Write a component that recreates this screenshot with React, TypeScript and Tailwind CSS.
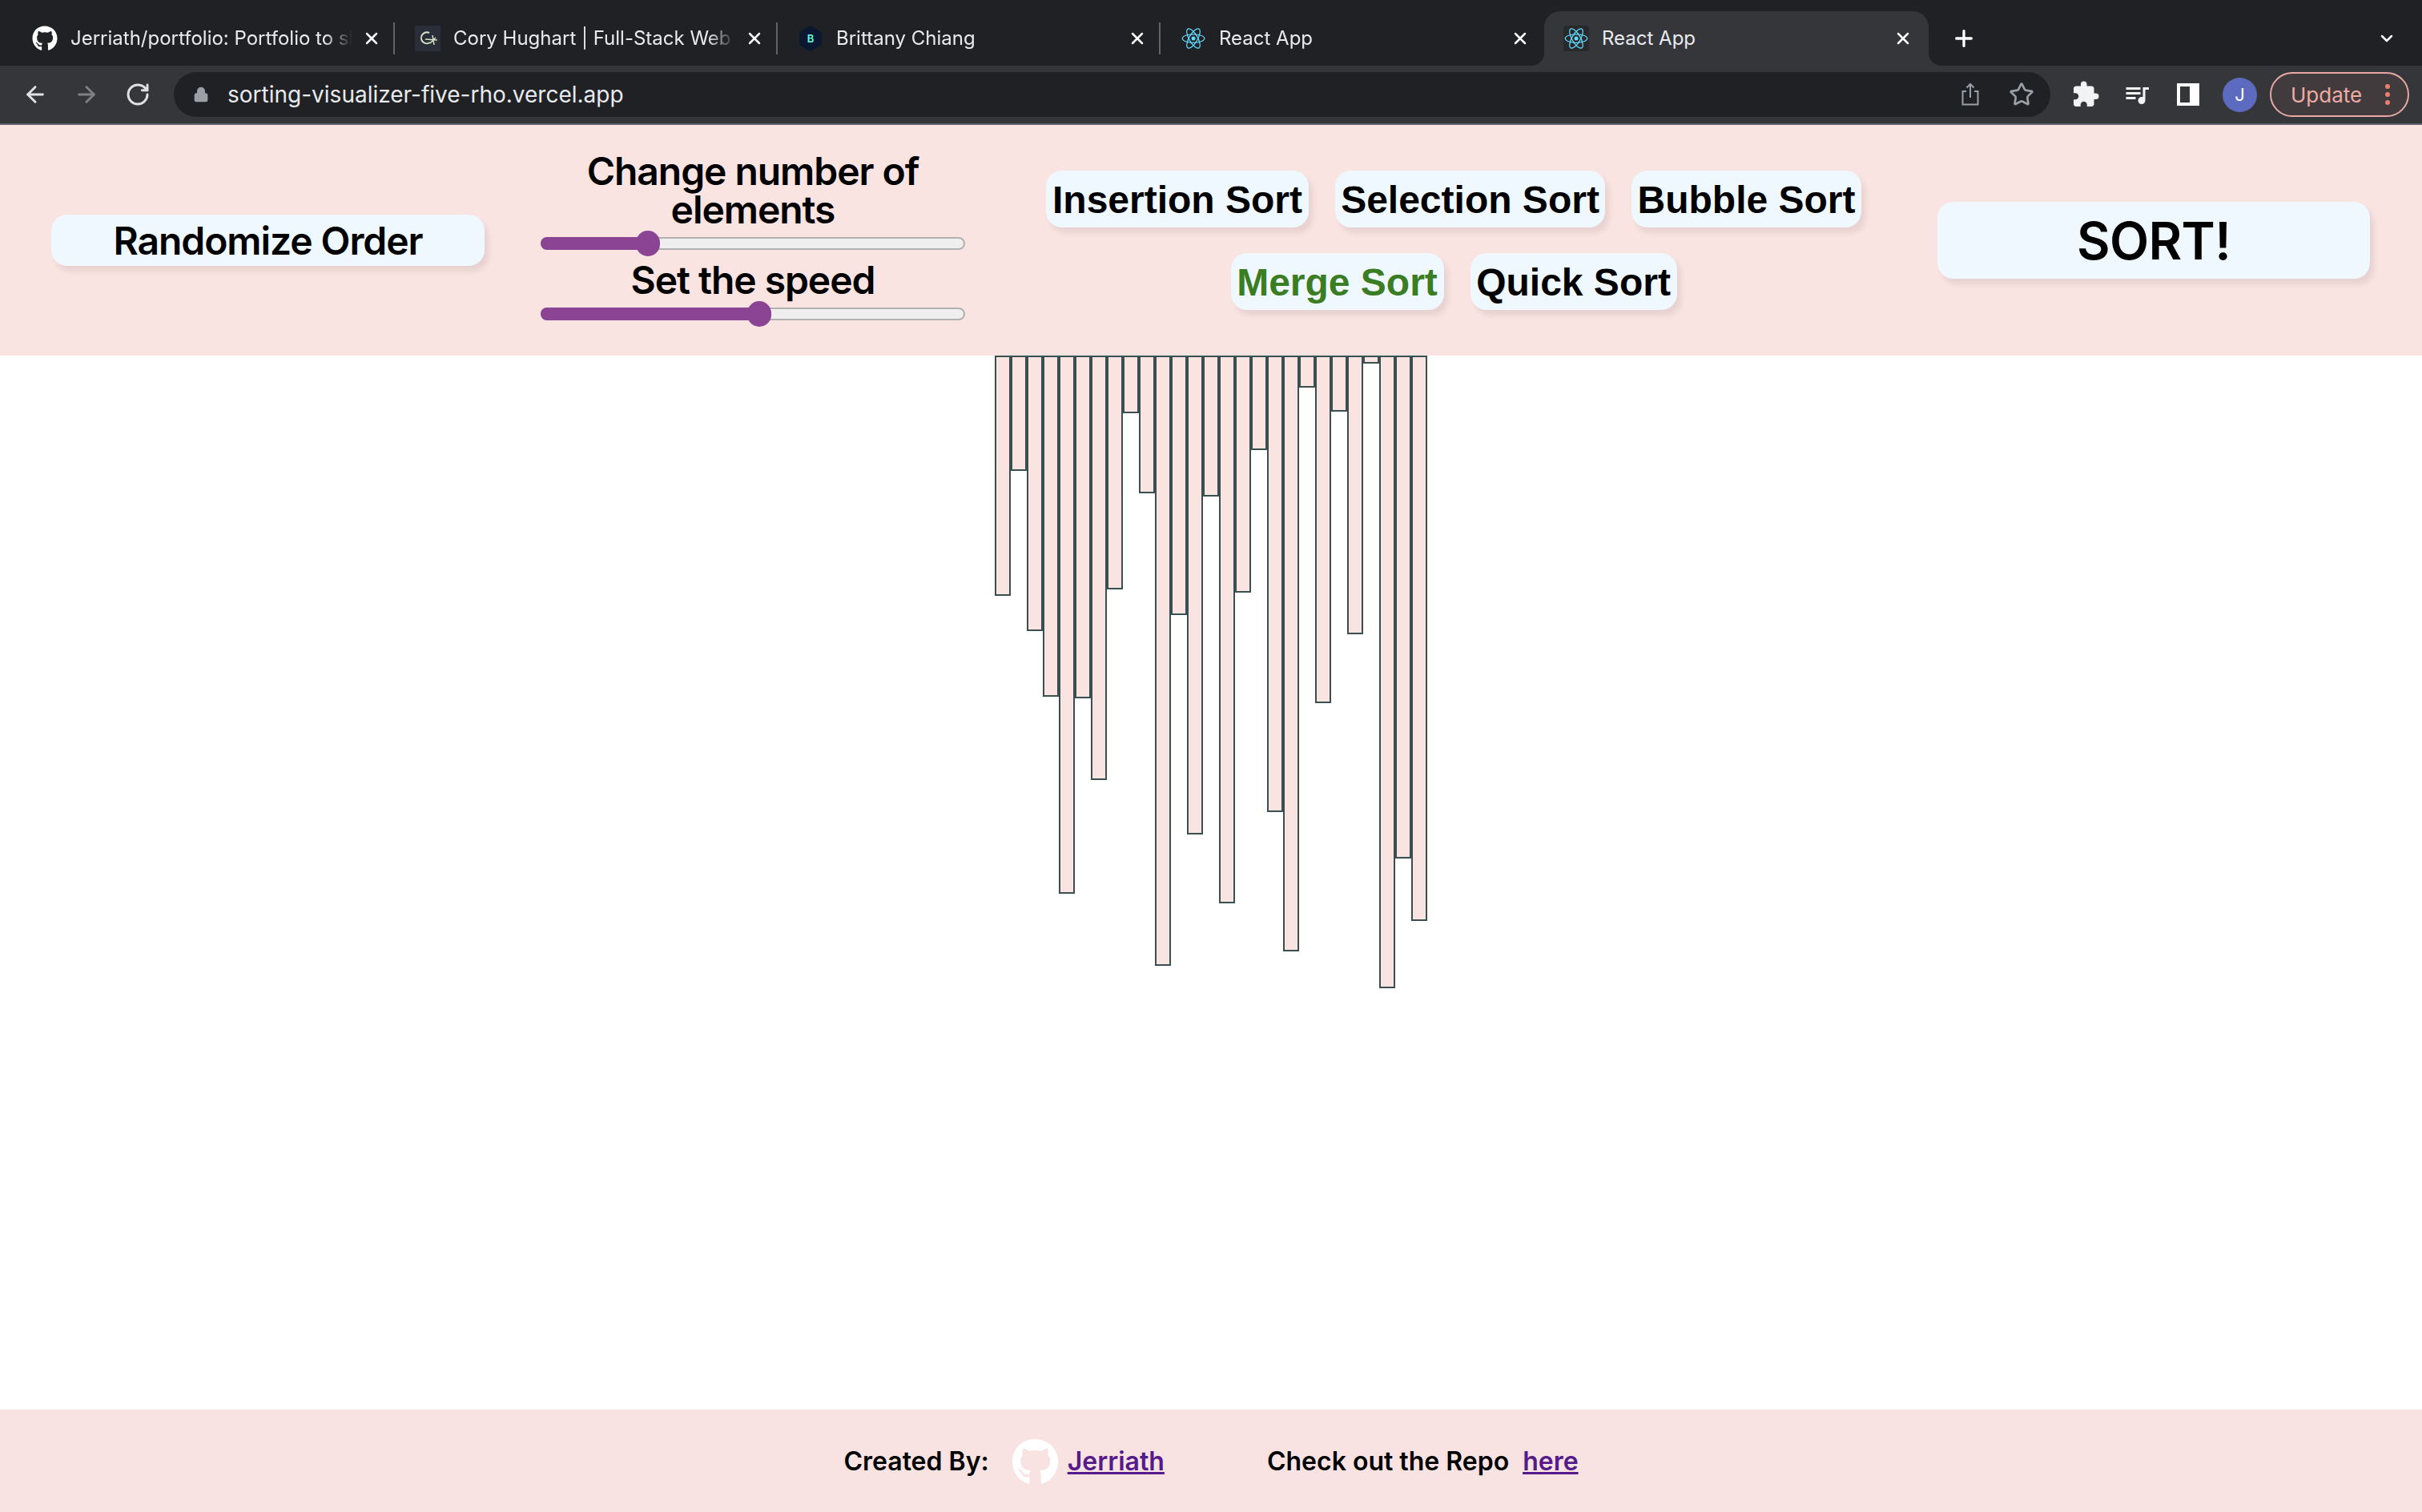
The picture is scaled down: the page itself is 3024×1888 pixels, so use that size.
import type { ReactNode } from "react";
import { FaGithub } from "react-icons/fa";
import { MdExtension, MdQueueMusic } from "react-icons/md";
import { ArrowLeft, ArrowRight, ChevronDown, Lock, Plus, RotateCw, Star, X } from "lucide-react";

const BAR_HEIGHTS = [
  300, 144, 344, 426, 672, 428, 530, 292, 72, 172, 762, 324, 598, 176, 684, 296, 118, 570, 744, 40, 434, 70, 348, 10,
  790, 628, 706,
];

function ReactIcon() {
  return (
    <svg viewBox="-12 -12 24 24" className="h-[30px] w-[30px]" fill="none" stroke="#61dafb" strokeWidth="1">
      <circle r="2" fill="#61dafb" stroke="none" />
      <ellipse rx="11" ry="4.2" />
      <ellipse rx="11" ry="4.2" transform="rotate(60)" />
      <ellipse rx="11" ry="4.2" transform="rotate(120)" />
    </svg>
  );
}

function CoryIcon() {
  return (
    <div className="flex h-8 w-8 items-center justify-center bg-[#2a2e38]">
      <svg viewBox="0 0 32 32" className="h-8 w-8" fill="none" stroke="#d7e6c8" strokeWidth="2">
        <path d="M18 9a7 7 0 1 0 1 12" />
        <path d="M13 17l15 1M22 12l2 12M19 22l7-7" strokeWidth="1.5" />
      </svg>
    </div>
  );
}

function BrittanyIcon() {
  return (
    <svg viewBox="0 0 32 32" className="h-8 w-8">
      <polygon points="16,0 30,8 30,24 16,32 2,24 2,8" fill="#0a192f" />
      <text x="16" y="21" textAnchor="middle" fontSize="13" fontWeight="600" fill="#64ffda" fontFamily="Inter, sans-serif">
        B
      </text>
    </svg>
  );
}

function Tab({ icon, title, last }: { icon: ReactNode; title: string; last?: boolean }) {
  return (
    <div className="flex h-[68px] w-[478px] items-center pl-6">
      <div className="flex h-8 w-8 shrink-0 items-center justify-center">{icon}</div>
      <div className="ml-4 w-[352px] overflow-hidden whitespace-nowrap text-[24px] text-[#e8eaed] [mask-image:linear-gradient(to_right,black_90%,transparent)]">
        {title}
      </div>
      <X className="ml-[12px] h-6 w-6 shrink-0 text-white" strokeWidth={2.5} />
      {!last && <div className="ml-[15px] h-10 w-[2px] shrink-0 bg-[#5f6368]" />}
    </div>
  );
}

function ActiveTab() {
  return (
    <div className="relative flex h-[68px] w-[480px] items-center rounded-t-[20px] bg-[#35363a] pl-6">
      <div className="absolute -left-4 bottom-0 h-4 w-4 bg-[#35363a]">
        <div className="h-4 w-4 rounded-br-[16px] bg-[#202124]" />
      </div>
      <div className="absolute -right-4 bottom-0 h-4 w-4 bg-[#35363a]">
        <div className="h-4 w-4 rounded-bl-[16px] bg-[#202124]" />
      </div>
      <div className="flex h-8 w-8 items-center justify-center rounded bg-[#28292c]">
        <ReactIcon />
      </div>
      <div className="ml-4 w-[352px] text-[24px] text-[#e8eaed]">React App</div>
      <X className="ml-[12px] h-6 w-6 text-white" strokeWidth={2.5} />
    </div>
  );
}

function ShareIcon() {
  return (
    <svg viewBox="0 0 24 30" className="h-[30px] w-6" fill="none" stroke="#9aa0a6" strokeWidth="2">
      <path d="M7 11H2.500v16.500h19V11H17" />
      <path d="M12 19V2M7.500 6.500 12 2l4.500 4.500" />
    </svg>
  );
}

function SidePanelIcon() {
  return <div className="h-[28px] w-[28px] border-[4px] border-r-[12px] border-white bg-[#35363a]" />;
}

function BrowserChrome() {
  return (
    <div className="bg-[#202124]">
      <div className="flex h-[82px] items-end pl-4">
        <Tab icon={<FaGithub className="h-8 w-8 text-white" />} title="Jerriath/portfolio: Portfolio to showcase" />
        <Tab icon={<CoryIcon />} title="Cory Hughart | Full-Stack Web Developer" />
        <Tab icon={<BrittanyIcon />} title="Brittany Chiang" />
        <Tab icon={<ReactIcon />} title="React App" last />
        <ActiveTab />
        <Plus className="ml-[28px] mb-[18px] h-8 w-8 text-white" strokeWidth={2.5} />
        <ChevronDown className="ml-[500px] mb-[22px] h-6 w-6 text-white" strokeWidth={2.5} />
      </div>
      <div className="flex h-[74px] items-center border-b-2 border-[#5f6368] bg-[#35363a] pl-[28px] pr-[15px]">
        <ArrowLeft className="h-8 w-8 text-[#dfe1e5]" strokeWidth={2.2} />
        <ArrowRight className="ml-8 h-8 w-8 text-[#7d8085]" strokeWidth={2.2} />
        <RotateCw className="ml-8 h-8 w-8 text-[#dfe1e5]" strokeWidth={2.2} />
        <div className="ml-[29px] flex h-14 w-[2343px] items-center rounded-full bg-[#202124] pl-[24px]">
          <Lock className="h-[22px] w-[20px] text-[#9aa0a6]" fill="#9aa0a6" strokeWidth={2} />
          <span className="ml-[23px] text-[28px] text-[#e8eaed]">sorting-visualizer-five-rho.vercel.app</span>
          <div className="ml-auto flex items-center gap-[36px] pr-[20px]">
            <ShareIcon />
            <Star className="h-[32px] w-[32px] text-[#9aa0a6]" strokeWidth={2} />
          </div>
        </div>
        <MdExtension className="ml-[26px] h-9 w-9 text-[#f1f3f4]" />
        <MdQueueMusic className="ml-[28px] h-9 w-9 text-[#f1f3f4]" />
        <div className="ml-[32px]">
          <SidePanelIcon />
        </div>
        <div className="ml-[29px] flex h-[43px] w-[43px] items-center justify-center rounded-full bg-[#5c6bc0] text-[22px] text-white">
          J
        </div>
        <div className="ml-4 flex h-14 w-[174px] items-center rounded-full border-2 border-[#e8a9a2] bg-[#413b3e] pl-[24px] text-[26px] text-[#eeaba4]">
          Update
          <div className="ml-[29px] flex flex-col gap-[4px]">
            <div className="h-[6px] w-[6px] rounded-full bg-[#e8806f]" />
            <div className="h-[6px] w-[6px] rounded-full bg-[#e8806f]" />
            <div className="h-[6px] w-[6px] rounded-full bg-[#e8806f]" />
          </div>
        </div>
      </div>
    </div>
  );
}

function Pill({ children, className }: { children: ReactNode; className: string }) {
  return (
    <button
      className={
        "flex items-center justify-center rounded-[20px] bg-[#f0f8ff] pt-[2px] shadow-[5px_7px_7px_rgba(0,0,0,0.08)] " +
        className
      }
    >
      {children}
    </button>
  );
}

function Slider({ value }: { value: number }) {
  return (
    <div className="relative mt-[10px] h-4 w-[530px] rounded-full border-2 border-[#b2b2b2] bg-[#efefef]">
      <div className="-m-[2px] h-4 rounded-l-full bg-[#8b4393]" style={{ width: value }} />
      <div
        className="absolute -top-[10px] h-8 w-[30px] -translate-x-1/2 rounded-full bg-[#8b4393]"
        style={{ left: value - 2 }}
      />
    </div>
  );
}

function ControlBar() {
  return (
    <header className="flex h-[288px] items-center bg-[#fae4e2] pl-[64px] text-black">
      <Pill className="h-16 w-[541px] text-[48px] font-semibold tracking-[-0.022em]">Randomize Order</Pill>
      <div className="ml-[70px] flex w-[530px] flex-col items-center pb-[10px] text-center text-[48px] font-semibold leading-[48px] tracking-[-0.022em]">
        <div>
          Change number of
          <br />
          elements
        </div>
        <Slider value={134} />
        <div className="mt-[14px]">Set the speed</div>
        <Slider value={273} />
      </div>
      {/* these five use the browser's default button font, not Inter */}
      <div className="ml-[101px] flex w-[1018px] flex-wrap justify-center gap-x-[33px] gap-y-[32px] text-[48px] font-bold [font-family:'Liberation_Sans',Arial,sans-serif]">
        <Pill className="h-[71px] w-[328px]">Insertion Sort</Pill>
        <Pill className="h-[71px] w-[337px]">Selection Sort</Pill>
        <Pill className="h-[71px] w-[287px]">Bubble Sort</Pill>
        <Pill className="h-[71px] w-[266px] text-[#3a7d22]">Merge Sort</Pill>
        <Pill className="h-[71px] w-[258px]">Quick Sort</Pill>
      </div>
      <Pill className="ml-[95px] h-24 w-[540px] text-[64px] font-semibold tracking-[-0.01em]">SORT!</Pill>
    </header>
  );
}

function Footer() {
  return (
    <footer className="flex h-[128px] items-center justify-center bg-[#f9e3e2] pt-[2px] text-[32px] font-semibold text-black">
      <span>Created By:</span>
      <FaGithub className="ml-[28px] h-[59px] w-[59px] text-white" />
      <a className="ml-[11px] text-[#551a8b] underline">Jerriath</a>
      <span className="ml-[128px]">Check out the Repo</span>
      <a className="ml-[17px] text-[#551a8b] underline">here</a>
    </footer>
  );
}

export default function App() {
  return (
    <div className="flex h-[1888px] w-[3024px] flex-col overflow-hidden bg-white [font-family:Inter,sans-serif]">
      <BrowserChrome />
      <ControlBar />
      <main className="flex flex-1 items-start justify-center">
        {BAR_HEIGHTS.map((h, i) => (
          <div key={i} className="w-5 border-2 border-[#3a5050] bg-[#fae4e2]" style={{ height: h }} />
        ))}
      </main>
      <Footer />
    </div>
  );
}
